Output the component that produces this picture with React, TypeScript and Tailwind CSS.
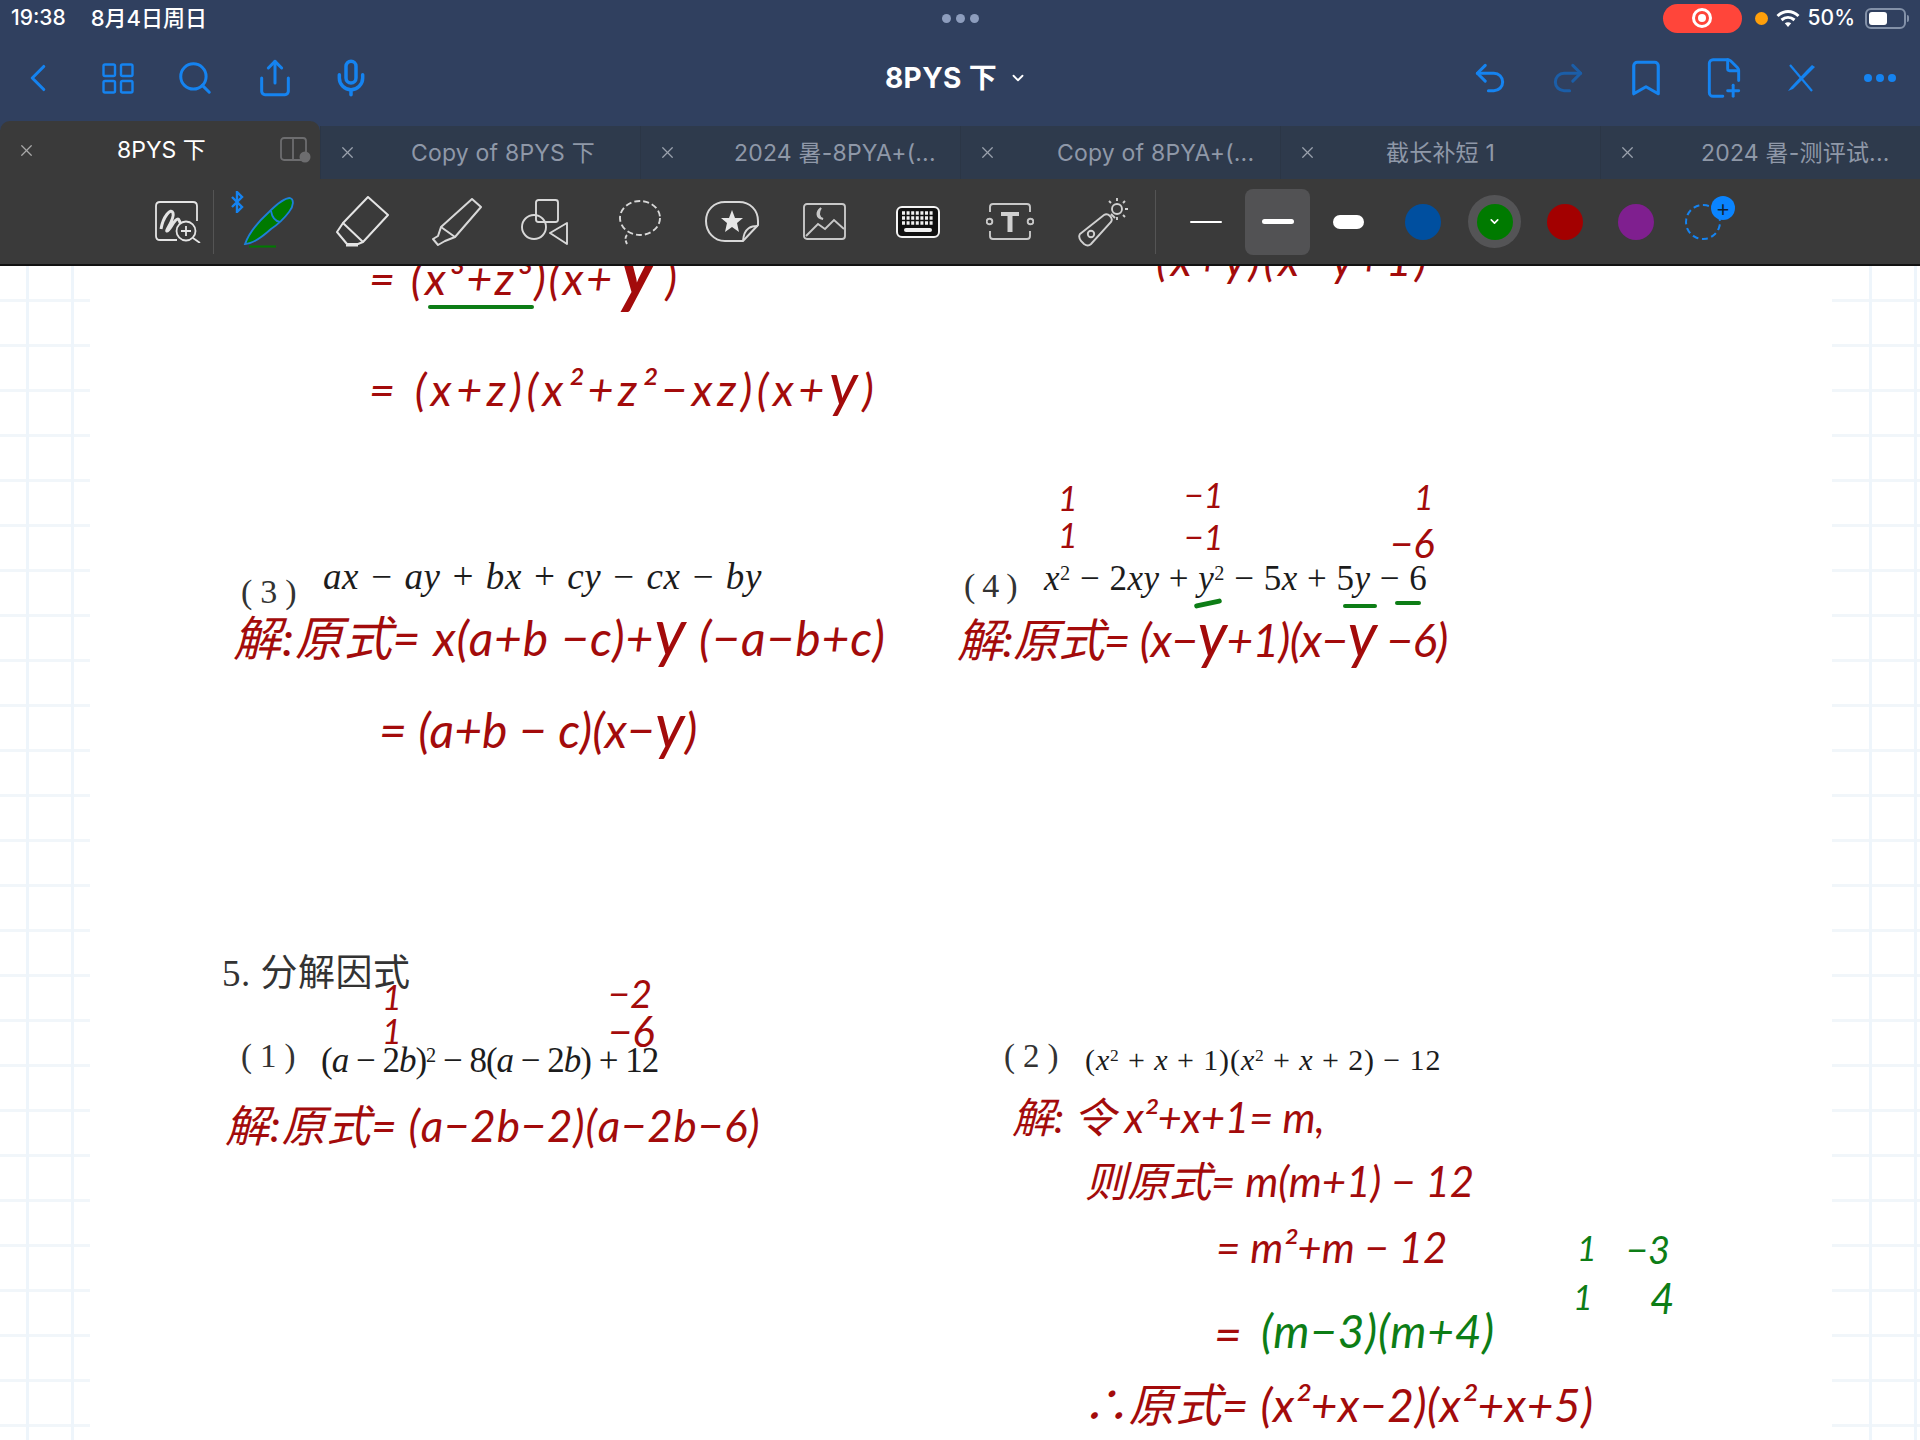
import { Search, Mic, Share, Undo2, Redo2, Bookmark, FilePlus2, X, ChevronDown, ChevronLeft } from "lucide-react";

const sans = "font-['Inter','Noto_Sans_CJK_SC',sans-serif]";
const blue = "#1583f0";

const tabs = ["Copy of 8PYS 下", "2024 暑-8PYA+(...", "Copy of 8PYA+(...", "截长补短 1", "2024 暑-测评试..."];

function Tab({ title, offset }: { title: string; offset: string }) {
  return (
    <div className="relative flex h-[53px] w-[320px] items-center border-l border-[#2b3646] bg-[#2e3a4c]">
      <X size={19} strokeWidth={1.6} className="ml-[17px] shrink-0 text-[#9aa1ad]" />
      <span className={`${offset} mt-[1px] whitespace-nowrap text-[23px] tracking-[0.2px] text-[#8f98a8]`}>{title}</span>
    </div>
  );
}

// round swatch in the colour row of the pencil toolbar
function Swatch({ color, className }: { color: string; className: string }) {
  return <div className={`h-[36px] w-[36px] rounded-full ${className}`} style={{ backgroundColor: color }} />;
}

function StatusBar() {
  return (
    <div className={`grid h-[36px] grid-cols-[1fr_auto_1fr] items-center ${sans} text-white`}>
      <div className="flex items-center">
        <span className="ml-[11px] text-[21px] font-medium">19:38</span>
        <span className="ml-[25px] text-[22px] font-medium">8月4日周日</span>
      </div>
      <div className="flex gap-[5px]">
        <span className="h-[9px] w-[9px] rounded-full bg-[#8d9dbd]" />
        <span className="h-[9px] w-[9px] rounded-full bg-[#8d9dbd]" />
        <span className="h-[9px] w-[9px] rounded-full bg-[#8d9dbd]" />
      </div>
      <div className="flex items-center justify-end pr-[11px]">
        <div className="flex h-[29px] w-[79px] items-center justify-center rounded-full bg-[#ff453a]">
          <span className="flex h-[20px] w-[20px] items-center justify-center rounded-full border-[3px] border-white">
            <span className="h-[8px] w-[8px] rounded-full bg-white" />
          </span>
        </div>
        <span className="ml-[13px] h-[13px] w-[13px] rounded-full bg-[#ff9f0a]" />
        <svg width="24" height="19" viewBox="0 0 24 19" className="ml-[8px]" fill="none" stroke="white" strokeWidth="3">
          <path d="M1.5 7 C8 1 16 1 22.5 7" />
          <path d="M5.5 11 C9.5 7.5 14.5 7.5 18.5 11" />
          <path d="M12 18 L8.8 14.2 C10.6 12.8 13.4 12.8 15.2 14.2 Z" fill="white" stroke="none" />
        </svg>
        <span className="ml-[8px] text-[21px] font-medium">50%</span>
        <div className="ml-[10px] flex h-[21px] w-[41px] items-center rounded-[6px] border-2 border-[#8391a8] p-[2px]">
          <span className="h-full w-[18px] rounded-[3px] bg-white" />
        </div>
        <span className="ml-[1px] h-[7px] w-[2px] rounded-r bg-[#8391a8]" />
      </div>
    </div>
  );
}

function NavBar() {
  return (
    <div className="flex h-[85px] items-center pb-[1px]" style={{ color: blue }}>
      <ChevronLeft size={46} strokeWidth={1.6} className="ml-[15px]" />
      <svg width="32" height="31" viewBox="0 0 32 31" fill="none" stroke="currentColor" strokeWidth="2.4" className="ml-[41px]">
        <rect x="1.5" y="1.5" width="11.5" height="11.5" rx="1.5" />
        <rect x="19" y="1.5" width="11.5" height="11.5" rx="1.5" />
        <rect x="1.5" y="18" width="11.5" height="11.5" rx="1.5" />
        <rect x="19" y="18" width="11.5" height="11.5" rx="1.5" />
      </svg>
      <Search size={38} strokeWidth={1.9} className="ml-[42px]" />
      <Share size={40} strokeWidth={1.8} className="ml-[41px]" />
      <Mic size={40} strokeWidth={2.1} className="ml-[36px]" />
      <span className={`ml-[514px] ${sans} whitespace-nowrap text-[28px] font-bold tracking-[0.4px] text-white`}>8PYS 下</span>
      <ChevronDown size={18} strokeWidth={2.4} className="ml-[12px] text-white" />
      <Undo2 size={38} strokeWidth={1.9} className="ml-[444px]" />
      <Redo2 size={38} strokeWidth={1.9} className="ml-[40px] text-[#1b5ea8]" />
      <Bookmark size={42} strokeWidth={1.8} className="ml-[38px]" />
      <FilePlus2 size={44} strokeWidth={1.6} className="ml-[35px]" />
      <svg width="30" height="28" viewBox="0 0 30 28" fill="none" stroke="currentColor" strokeWidth="2.2" className="ml-[41px]">
        <path d="M3 1 L25 27" />
        <path d="M28 3 L25 1 L20 6 L4 23 L1 27 L6 25 L23 8 Z" fill="currentColor" stroke="none" />
      </svg>
      <div className="ml-[47px] flex gap-[4px]">
        <span className="h-[8px] w-[8px] rounded-full bg-current" />
        <span className="h-[8px] w-[8px] rounded-full bg-current" />
        <span className="h-[8px] w-[8px] rounded-full bg-current" />
      </div>
    </div>
  );
}

function TabBar() {
  return (
    <div className={`flex h-[58px] items-end ${sans}`}>
      <div className="flex h-[58px] w-[320px] items-center rounded-t-[10px] bg-[#3a3a3a]">
        <X size={19} strokeWidth={1.6} className="ml-[17px] text-[#a8a8a8]" />
        <span className="ml-[81px] mt-[1px] whitespace-nowrap text-[23px] text-white">8PYS 下</span>
        <svg width="31" height="26" viewBox="0 0 31 26" fill="none" stroke="#6d6d6f" strokeWidth="1.8" className="ml-[74px]">
          <rect x="1" y="1" width="25" height="22" rx="3" />
          <path d="M13 1 V23" />
          <circle cx="25" cy="20" r="5.5" fill="#6d6d6f" stroke="none" />
        </svg>
      </div>
      <Tab title={tabs[0]} offset="ml-[54px]" />
      <Tab title={tabs[1]} offset="ml-[57px]" />
      <Tab title={tabs[2]} offset="ml-[60px]" />
      <Tab title={tabs[3]} offset="ml-[69px]" />
      <Tab title={tabs[4]} offset="ml-[64px]" />
    </div>
  );
}

function ToolBar() {
  return (
    <div className="flex h-[87px] items-center border-b-2 border-[#111] bg-[#3a3a3a]">
      <svg width="46" height="42" viewBox="0 0 46 42" fill="none" stroke="#e4e4e4" strokeWidth="1.8" className="ml-[155px]">
        <path d="M22 39 H5 Q1 39 1 35 V5 Q1 1 5 1 H38 Q42 1 42 5 V20" />
        <path d="M6 28 C8 16 16 6 18 12 C20 18 10 30 12 30 C15 30 19 18 23 18 C25 18 24 24 28 22" strokeWidth="3" />
        <circle cx="31" cy="30" r="9.5" fill="#3a3a3a" />
        <path d="M31 25 V35 M26 30 H36 M38 37 L45 42" />
      </svg>
      <div className="ml-[12px] h-[64px] w-px bg-[#545454]" />
      <div className="relative ml-[29px] h-[50px] w-[51px]">
        <svg width="15" height="22" viewBox="0 0 15 22" fill="none" stroke={blue} strokeWidth="2.4" className="absolute -left-[13px] -top-[6px]">
          <path d="M2 6 L12 16 L7 21 V1 L12 6 L2 16" />
        </svg>
        <svg width="51" height="51" viewBox="0 0 51 51" fill="#007a00" stroke="#1e7fd8" strokeWidth="1.8">
          <path d="M2 47 C6 36 16 24 26 15 C34 7 42 1 47 1 C51 2 51 9 46 15 C40 23 34 28 28 32 C18 41 8 47 2 47 Z" />
          <path d="M28 14 C29 20 32 24 37 25" fill="none" />
          <path d="M6 49.5 H33" stroke="#007a00" strokeWidth="2" />
        </svg>
      </div>
      <svg width="54" height="51" viewBox="0 0 54 51" fill="none" stroke="#e4e4e4" strokeWidth="2" strokeLinejoin="round" className="ml-[42px]">
        <path d="M32 1 L52 19 L27 46 L7 27 Z" />
        <path d="M7 27 L1 36 L11 48 H22 L27 46" />
        <path d="M10 49.5 H22" />
      </svg>
      <svg width="50" height="48" viewBox="0 0 50 48" fill="none" stroke="#d8d8d8" strokeWidth="2" strokeLinejoin="round" className="ml-[42px]">
        <path d="M40 1 L49 9 L23 39 L9 29 Z" />
        <path d="M9 29 L6 38 L1 41 L6 47 L13 43 L23 39" />
      </svg>
      <svg width="47" height="46" viewBox="0 0 47 46" fill="none" stroke="#d8d8d8" strokeWidth="1.9" className="ml-[39px]">
        <rect x="15" y="1" width="22" height="22" rx="2.5" />
        <circle cx="13" cy="28" r="12" />
        <path d="M46 24 L29 34 L46 45 Z" strokeLinejoin="round" />
      </svg>
      <svg width="43" height="46" viewBox="0 0 43 46" fill="none" stroke="#d8d8d8" strokeWidth="1.9" className="ml-[51px]">
        <ellipse cx="21" cy="19" rx="20" ry="17" strokeDasharray="6 3" />
        <path d="M8 36 C6 38 6 41 8 45" strokeDasharray="4 2" />
      </svg>
      <svg width="54" height="42" viewBox="0 0 54 42" fill="none" stroke="#d8d8d8" strokeWidth="2" className="ml-[43px]">
        <path d="M20 1 H34 C45 1 53 9 53 20 V24 L38 40 H20 C9 40 1 31 1 20 C1 9 9 1 20 1 Z" />
        <path d="M53 25 C47 25 39 26 38 40" />
        <path d="M27 9 L30 17 H38 L32 22 L34 31 L27 26 L20 31 L22 22 L16 17 H24 Z" fill="#e6e6e6" stroke="none" />
      </svg>
      <svg width="43" height="37" viewBox="0 0 43 37" fill="none" stroke="#c8c8c8" strokeWidth="1.9" className="ml-[44px]">
        <rect x="1" y="1" width="41" height="35" rx="3" />
        <path d="M18 5 C13 9 13 15 20 16 C15 14 15 9 18 5 Z" />
        <path d="M3 33 L15 21 L22 26 L31 17 L41 26" />
      </svg>
      <svg width="44" height="32" viewBox="0 0 44 32" className="ml-[50px]">
        <rect x="1" y="1" width="42" height="30" rx="5" fill="#111" stroke="#f4f4f4" strokeWidth="2" />
        <path d="M6 7 H38 M6 12 H38 M6 17 H38" stroke="#f0f0f0" strokeWidth="3.4" strokeDasharray="3 1.6" />
        <path d="M10 24 H34" stroke="#f0f0f0" strokeWidth="4" strokeLinecap="round" />
      </svg>
      <svg width="48" height="37" viewBox="0 0 48 37" fill="none" stroke="#c8c8c8" strokeWidth="1.9" className="ml-[46px]">
        <path d="M4 9 V4 Q4 1 7 1 H41 Q44 1 44 4 V9 M4 28 V33 Q4 36 7 36 H41 Q44 36 44 33 V28" />
        <circle cx="3.5" cy="18.5" r="2.8" />
        <circle cx="44.5" cy="18.5" r="2.8" />
        <path d="M15 9 H33 V13 H26.5 V29 H21.5 V13 H15 Z" fill="#d0d0d0" stroke="none" />
      </svg>
      <svg width="52" height="50" viewBox="0 0 52 50" fill="none" stroke="#d0d0d0" strokeWidth="1.9" className="ml-[44px]">
        <path d="M2 37 L26 18 Q29 16 32 19 Q35 22 33 25 L13 47 Q10 50 6 47 L3 44 Q0 40 2 37 Z" />
        <circle cx="13" cy="37" r="3.2" />
        <path d="M33 17 L37 21" />
        <circle cx="39" cy="12" r="5" />
        <path d="M39 1 V4 M39 20 V23 M50 12 H47 M31 4 L33 6 M47 4 L45 6 M47 20 L45 18" />
      </svg>
      <div className="ml-[25px] h-[64px] w-px bg-[#545454]" />
      <div className="ml-[34px] h-[2px] w-[32px] rounded-full bg-white" />
      <div className="ml-[23px] flex h-[66px] w-[65px] items-center justify-center rounded-[8px] bg-[#525254]">
        <div className="h-[5px] w-[32px] rounded-full bg-white" />
      </div>
      <div className="ml-[23px] h-[14px] w-[31px] rounded-full bg-white" />
      <Swatch color="#004f9f" className="ml-[41px]" />
      <div className="ml-[27px] flex h-[53px] w-[53px] items-center justify-center rounded-full bg-[#545456]">
        <div className="flex h-[36px] w-[36px] items-center justify-center rounded-full bg-[#007a00]">
          <ChevronDown size={13} strokeWidth={3} className="text-white" />
        </div>
      </div>
      <Swatch color="#a30000" className="ml-[26px]" />
      <Swatch color="#7f1f8f" className="ml-[35px]" />
      <div className="relative ml-[31px] h-[36px] w-[36px] rounded-full border-2 border-dashed border-[#1583f0]">
        <span className="absolute -right-[16px] -top-[10px] flex h-[24px] w-[24px] items-center justify-center rounded-full bg-[#0a84ff] text-[22px] leading-none text-[#123]">
          +
        </span>
      </div>
    </div>
  );
}

const ink = "absolute whitespace-nowrap leading-none italic text-[#a30b0b] font-['Lato','Noto_Sans_CJK_SC',sans-serif]";
const inkGreen = "absolute whitespace-nowrap leading-none italic text-[#0d7d16] font-['Lato','Noto_Sans_CJK_SC',sans-serif]";
const print = "absolute whitespace-nowrap leading-none text-[#1c1c1c] font-['Liberation_Serif','Noto_Sans_CJK_SC',serif]";
const num = "absolute whitespace-nowrap leading-none text-[#333] font-['Liberation_Serif','Noto_Sans_CJK_SC',serif]";

function Sup({ children }: { children: React.ReactNode }) {
  return <sup className="text-[0.58em]">{children}</sup>;
}

function Page() {
  return (
    <div className="relative flex-1 overflow-hidden bg-white">
      {/* faded notebook grid on both margins */}
      <div className="absolute inset-y-0 left-0 w-[90px] bg-[repeating-linear-gradient(90deg,transparent_0,transparent_26px,#eef5fb_26px,#eef5fb_29px,transparent_29px,transparent_45px),repeating-linear-gradient(180deg,transparent_0,transparent_33px,#f1f6fa_33px,#f1f6fa_36px,transparent_36px,transparent_45px)]" />
      <div className="absolute inset-y-0 right-0 w-[88px] bg-[repeating-linear-gradient(90deg,transparent_0,transparent_37px,#eef5fb_37px,#eef5fb_40px,transparent_40px,transparent_45px),repeating-linear-gradient(180deg,transparent_0,transparent_33px,#f1f6fa_33px,#f1f6fa_36px,transparent_36px,transparent_45px)]" />

      {/* top of the page, cut by the toolbar */}
      <div className={`${ink} left-[369px] -top-[60px] text-[45px] tracking-[2.6px]`}>= (x³+z³)(x+<span className="text-[100px]">y</span>)</div>
      <div className={`${ink} left-[1113px] -top-[29px] text-[45px] tracking-[3.2px]`}>= (x+y)(x−y+1)</div>
      <div className="absolute left-[428px] top-[39px] h-[4px] w-[106px] rounded-full bg-[#0d7d16]" />
      <div className={`${ink} left-[369px] top-[87px] text-[45px] tracking-[4.5px]`}>= (x+z)(x²+z²−xz)(x+<span className="text-[60px]">y</span>)</div>

      {/* question 3 */}
      <div className={`${num} left-[241px] top-[309px] text-[34px] tracking-[8px]`}>(3)</div>
      <div className={`${print} left-[323px] top-[292px] text-[37px] italic tracking-[0.6px]`}>ax − ay + bx + cy − cx − by</div>
      <div className={`${ink} left-[233px] top-[332px] text-[48px] tracking-[0.9px]`}>解:原式= x(a+b −c)+<span className="text-[66px]">y</span> (−a−b+c)</div>
      <div className={`${ink} left-[379px] top-[427px] text-[48px] tracking-[0.1px]`}>= (a+b − c)(x−<span className="text-[62px]">y</span>)</div>

      {/* question 4 */}
      <div className={`${num} left-[964px] top-[303px] text-[34px] tracking-[7px]`}>(4)</div>
      <div className={`${print} left-[1044px] top-[295px] text-[35px] tracking-[0.5px]`}>
        <i>x</i><Sup>2</Sup> − 2<i>xy</i> + <i>y</i><Sup>2</Sup> − 5<i>x</i> + 5<i>y</i> − 6
      </div>
      <div className={`${ink} left-[1058px] top-[215px] text-[34px]`}>1</div>
      <div className={`${ink} left-[1058px] top-[252px] text-[34px]`}>1</div>
      <div className={`${ink} left-[1184px] top-[212px] text-[34px]`}>−1</div>
      <div className={`${ink} left-[1184px] top-[254px] text-[34px]`}>−1</div>
      <div className={`${ink} left-[1414px] top-[214px] text-[34px]`}>1</div>
      <div className={`${ink} left-[1390px] top-[257px] text-[40px]`}>−6</div>
      <div className="absolute left-[1194px] top-[335px] h-[5px] w-[28px] -rotate-12 rounded-full bg-[#0d7d16]" />
      <div className="absolute left-[1343px] top-[338px] h-[4px] w-[34px] rounded-full bg-[#0d7d16]" />
      <div className="absolute left-[1395px] top-[335px] h-[4px] w-[26px] rounded-full bg-[#0d7d16]" />
      <div className={`${ink} left-[957px] top-[336px] text-[46px] tracking-[-0.7px]`}>解:原式= (x−<span className="text-[62px]">y</span>+1)(x−<span className="text-[62px]">y</span> −6)</div>

      {/* question 5 */}
      <div className={`${num} left-[222px] top-[689px] text-[37px] tracking-[0.5px]`}>5. 分解因式</div>
      <div className={`${num} left-[241px] top-[774px] text-[33px] tracking-[8px]`}>(1)</div>
      <div className={`${print} left-[321px] top-[777px] text-[35px] tracking-[-1px]`}>
        (<i>a</i> − 2<i>b</i>)<Sup>2</Sup> − 8(<i>a</i> − 2<i>b</i>) + 12
      </div>
      <div className={`${ink} left-[382px] top-[714px] text-[34px]`}>1</div>
      <div className={`${ink} left-[382px] top-[748px] text-[34px]`}>1</div>
      <div className={`${ink} left-[608px] top-[708px] text-[38px]`}>−2</div>
      <div className={`${ink} left-[608px] top-[744px] text-[42px]`}>−6</div>
      <div className={`${ink} left-[225px] top-[837px] text-[44px] tracking-[0.8px]`}>解:原式= (a−2b−2)(a−2b−6)</div>

      <div className={`${num} left-[1004px] top-[774px] text-[33px] tracking-[8px]`}>(2)</div>
      <div className={`${print} left-[1085px] top-[779px] text-[30px] tracking-[0.9px]`}>
        (<i>x</i><Sup>2</Sup> + <i>x</i> + 1)(<i>x</i><Sup>2</Sup> + <i>x</i> + 2) − 12
      </div>
      <div className={`${ink} left-[1012px] top-[830px] text-[42px] tracking-[-0.3px]`}>解: 令 x²+x+1= m,</div>
      <div className={`${ink} left-[1085px] top-[894px] text-[42px]`}>则原式= m(m+1) − 12</div>
      <div className={`${ink} left-[1216px] top-[960px] text-[42px]`}>= m²+m − 12</div>
      <div className={`${ink} left-[1214px] top-[1044px] text-[48px]`}>=</div>
      <div className={`${inkGreen} left-[1261px] top-[1042px] text-[46px] tracking-[0.8px]`}>(m−3)(m+4)</div>
      <div className={`${inkGreen} left-[1577px] top-[965px] text-[34px]`}>1</div>
      <div className={`${inkGreen} left-[1626px] top-[964px] text-[38px]`}>−3</div>
      <div className={`${inkGreen} left-[1573px] top-[1014px] text-[34px]`}>1</div>
      <div className={`${inkGreen} left-[1650px] top-[1011px] text-[42px]`}>4</div>
      <div className={`${ink} left-[1082px] top-[1116px] text-[46px] tracking-[0.6px]`}>∴原式= (x²+x−2)(x²+x+5)</div>
    </div>
  );
}

export default function App() {
  return (
    <div className="flex h-[1440px] w-[1920px] flex-col overflow-hidden bg-[#30405f]">
      <StatusBar />
      <NavBar />
      <TabBar />
      <ToolBar />
      <Page />
    </div>
  );
}
